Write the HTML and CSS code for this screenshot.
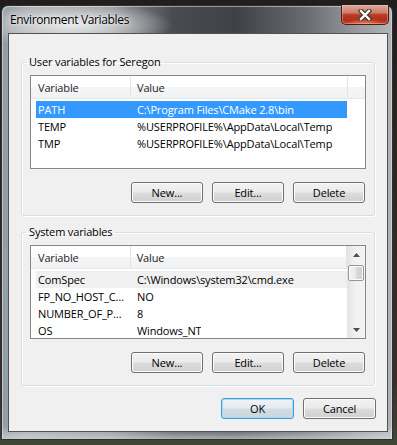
FILE: index.html
```html
<!DOCTYPE html>
<html lang="en">
<head>
    <meta charset="UTF-8">
    <title>Environment Variables</title>
    <link rel="stylesheet" href="styles.css">
</head>
<body>
    <div class="window">
        <div class="titlebar">
            <span class="title">Environment Variables</span>
            <button class="close" type="button" aria-label="Close">
                <svg viewBox="0 0 16 12" width="16" height="12">
                    <path d="M4 2 L12 10 M12 2 L4 10" stroke="#3b3b3b" stroke-width="4.6" stroke-linecap="square"/>
                    <path d="M4 2 L12 10 M12 2 L4 10" stroke="#fff" stroke-width="2.4" stroke-linecap="square"/>
                </svg>
            </button>
        </div>

        <div class="client">
            <!-- User variables -->
            <fieldset class="group">
                <legend>User variables for Seregon</legend>
                <div class="list">
                    <div class="list-main">
                        <div class="list-head">
                            <span class="h-var">Variable</span>
                            <span class="h-val">Value</span>
                            <span class="h-rest"></span>
                        </div>
                        <div class="rows">
                            <div class="row selected"><span class="c-var">PATH</span><span class="c-val">C:\Program Files\CMake 2.8\bin</span></div>
                            <div class="row"><span class="c-var">TEMP</span><span class="c-val">%USERPROFILE%\AppData\Local\Temp</span></div>
                            <div class="row"><span class="c-var">TMP</span><span class="c-val">%USERPROFILE%\AppData\Local\Temp</span></div>
                        </div>
                    </div>
                </div>
                <div class="buttons">
                    <button type="button">New...</button>
                    <button type="button">Edit...</button>
                    <button type="button">Delete</button>
                </div>
            </fieldset>

            <!-- System variables -->
            <fieldset class="group group-system">
                <legend>System variables</legend>
                <div class="list">
                    <div class="list-main">
                        <div class="list-head">
                            <span class="h-var">Variable</span>
                            <span class="h-val">Value</span>
                        </div>
                        <div class="rows">
                            <div class="row focused"><span class="c-var">ComSpec</span><span class="c-val">C:\Windows\system32\cmd.exe</span></div>
                            <div class="row"><span class="c-var">FP_NO_HOST_C…</span><span class="c-val">NO</span></div>
                            <div class="row"><span class="c-var">NUMBER_OF_P…</span><span class="c-val">8</span></div>
                            <div class="row"><span class="c-var">OS</span><span class="c-val">Windows_NT</span></div>
                        </div>
                    </div>
                    <div class="scrollbar">
                        <div class="arrow">
                            <svg viewBox="0 0 7 4" width="7" height="4"><path d="M3.5 0 L7 4 L0 4 Z" fill="#4d4d4d"/></svg>
                        </div>
                        <div class="thumb"></div>
                        <div class="track"></div>
                        <div class="arrow">
                            <svg viewBox="0 0 7 4" width="7" height="4"><path d="M0 0 L7 0 L3.5 4 Z" fill="#4d4d4d"/></svg>
                        </div>
                    </div>
                </div>
                <div class="buttons">
                    <button type="button">New...</button>
                    <button type="button">Edit...</button>
                    <button type="button">Delete</button>
                </div>
            </fieldset>

            <div class="dialog-buttons">
                <button type="button" class="default">OK</button>
                <button type="button">Cancel</button>
            </div>
        </div>
    </div>
</body>
</html>
```

FILE: styles.css
```css
/* General Styles */
:root {
    --face-color: #f0f0f0;
    --text-color: #000;
    --group-border: #d5dfe5;
    --list-border: #828790;
    --select-color: #3399ff;
    --button-border: #707070;
}

* {
    box-sizing: border-box;
}

body {
    margin: 0;
    width: 397px;
    height: 445px;
    overflow: hidden;
    padding: 5px 0 0 1px;
    background: linear-gradient(180deg, #221e1c 0%, #33281f 50%, #3d2c27 85%, #3f4733 100%);
    font-family: "Open Sans", "Noto Sans", sans-serif;
    font-size: 11px;
    letter-spacing: -0.15px;
    color: var(--text-color);
}

/* Window frame */
.window {
    width: 392px;
    height: 435px;
    display: flex;
    flex-direction: column;
    padding: 0 4px 7px 6px;
    border: 1px solid #2c2f33;
    border-radius: 7px 7px 0 0;
    background:
        radial-gradient(ellipse 100px 24px at 70px 19px, rgba(238, 238, 238, 0.95), rgba(215, 215, 215, 0.6) 55%, rgba(200, 200, 200, 0) 100%),
        linear-gradient(180deg, rgba(255, 255, 255, 0) 97%, rgba(215, 220, 224, 0.7) 100%),
        linear-gradient(90deg, #8f9ba4 0%, #a6abb0 6%, #8c9095 28%, #484c52 44%, #3e4147 60%, #686c72 78%, #9a9ea2 92%, #b1b5b8 100%);
    box-shadow: inset 1px 1px 0 rgba(255, 255, 255, 0.45), inset -1px 0 0 rgba(255, 255, 255, 0.35);
}

.titlebar {
    height: 27px;
    display: flex;
    align-items: center;
    justify-content: space-between;
    flex-shrink: 0;
}

.title {
    padding-left: 2px;
    font-size: 12px;
    letter-spacing: -0.35px;
    color: #000;
    text-shadow: 0 0 6px rgba(255, 255, 255, 0.95), 0 0 2px rgba(255, 255, 255, 0.8);
}

.close {
    align-self: flex-start;
    margin: -1px -1px 0 0;
    width: 48px;
    height: 20px;
    padding: 0;
    display: flex;
    align-items: center;
    justify-content: center;
    border: 1px solid #4a1c15;
    border-top: none;
    border-radius: 0 0 5px 5px;
    background:
        radial-gradient(ellipse 18px 6px at 50% 100%, rgba(240, 140, 90, 0.8), rgba(240, 140, 90, 0) 100%),
        linear-gradient(180deg, #dca99c 0%, #cf7d6a 40%, #b83b25 52%, #b32d1a 80%, #c24a32 100%);
    box-shadow: inset 0 0 0 1px rgba(255, 220, 210, 0.35);
}

/* Dialog client area */
.client {
    flex: 1;
    display: flex;
    flex-direction: column;
    padding: 0 12px 12px 12px;
    border: 1px solid #4e535a;
    background: var(--face-color);
}

.group {
    margin: 21px 0 0;
    padding: 6px 8px 12px 8px;
    min-width: 0;
    border: 1px solid var(--group-border);
    border-radius: 3px;
    box-shadow: inset 1px 1px 0 #fff, 1px 1px 0 #fff;
}

.group-system {
    margin-top: 9px;
}

.group legend {
    margin-left: -4px;
    padding: 0 3px;
    line-height: 14px;
}

/* List view */
.list {
    height: 94px;
    display: flex;
    overflow: hidden;
    border: 1px solid var(--list-border);
    background: #fff;
}

.list-main {
    flex: 1;
    min-width: 0;
}

.list-head {
    height: 23px;
    display: flex;
    border-bottom: 1px solid #e6e7e9;
    background: linear-gradient(180deg, #fff 0%, #fff 48%, #f4f5f7 52%, #f1f2f4 100%);
    color: #1e1e1e;
}

.list-head span {
    display: flex;
    align-items: center;
    border-right: 1px solid #e3e4e6;
}

.h-var {
    width: 100px;
    padding-left: 7px;
}

.h-val {
    width: 217px;
    padding-left: 6px;
}

.h-rest {
    flex: 1;
    border-right: none !important;
}

.rows {
    padding-top: 2px;
}

.row {
    width: 311px;
    height: 17px;
    margin-left: 5px;
    display: flex;
    align-items: center;
    white-space: nowrap;
}

.row.selected {
    background: var(--select-color);
    color: #fff;
}

.row.focused {
    background: #f0f0f0;
}

.c-var {
    width: 101px;
    padding-left: 2px;
    flex-shrink: 0;
}

.c-val {
    overflow: hidden;
}

/* Scroll bar */
.scrollbar {
    width: 18px;
    display: flex;
    flex-direction: column;
    border-left: 1px solid #e4e4e4;
    background: linear-gradient(90deg, #e4e4e4 0%, #f1f1f1 40%, #f4f4f4 100%);
}

.arrow {
    height: 17px;
    display: flex;
    align-items: center;
    justify-content: center;
    flex-shrink: 0;
}

.thumb {
    height: 16px;
    margin: 2px 1px 0 0;
    flex-shrink: 0;
    border: 1px solid #979797;
    border-radius: 2px;
    background: linear-gradient(90deg, #f3f3f3 0%, #e8e8e8 50%, #d8d8d8 51%, #d0d0d0 100%);
    box-shadow: inset 0 0 0 1px #fbfbfb;
}

.track {
    flex: 1;
}

/* Buttons */
.buttons,
.dialog-buttons {
    display: flex;
    justify-content: flex-end;
    gap: 9px;
}

.buttons {
    margin-top: 13px;
    margin-right: 1px;
}

.dialog-buttons {
    margin-top: auto;
    margin-right: -1px;
}

button {
    font-family: inherit;
    font-size: 11px;
    letter-spacing: inherit;
    color: #000;
    cursor: pointer;
}

.buttons button,
.dialog-buttons button {
    width: 72px;
    height: 21px;
    padding: 0;
    border: 1px solid var(--button-border);
    border-radius: 3px;
    background: linear-gradient(180deg, #f2f2f2 0%, #ebebeb 48%, #dddddd 52%, #cfcfcf 100%);
    box-shadow: inset 0 0 0 1px #fcfcfc;
}

.dialog-buttons button {
    width: 73px;
}

.dialog-buttons button.default {
    border-color: #3c9bd8;
    background: linear-gradient(180deg, #eef3f7 0%, #e4ebf1 48%, #d3dce3 52%, #ccd6de 100%);
    box-shadow: inset 0 0 0 1px #a6def6;
}
```
